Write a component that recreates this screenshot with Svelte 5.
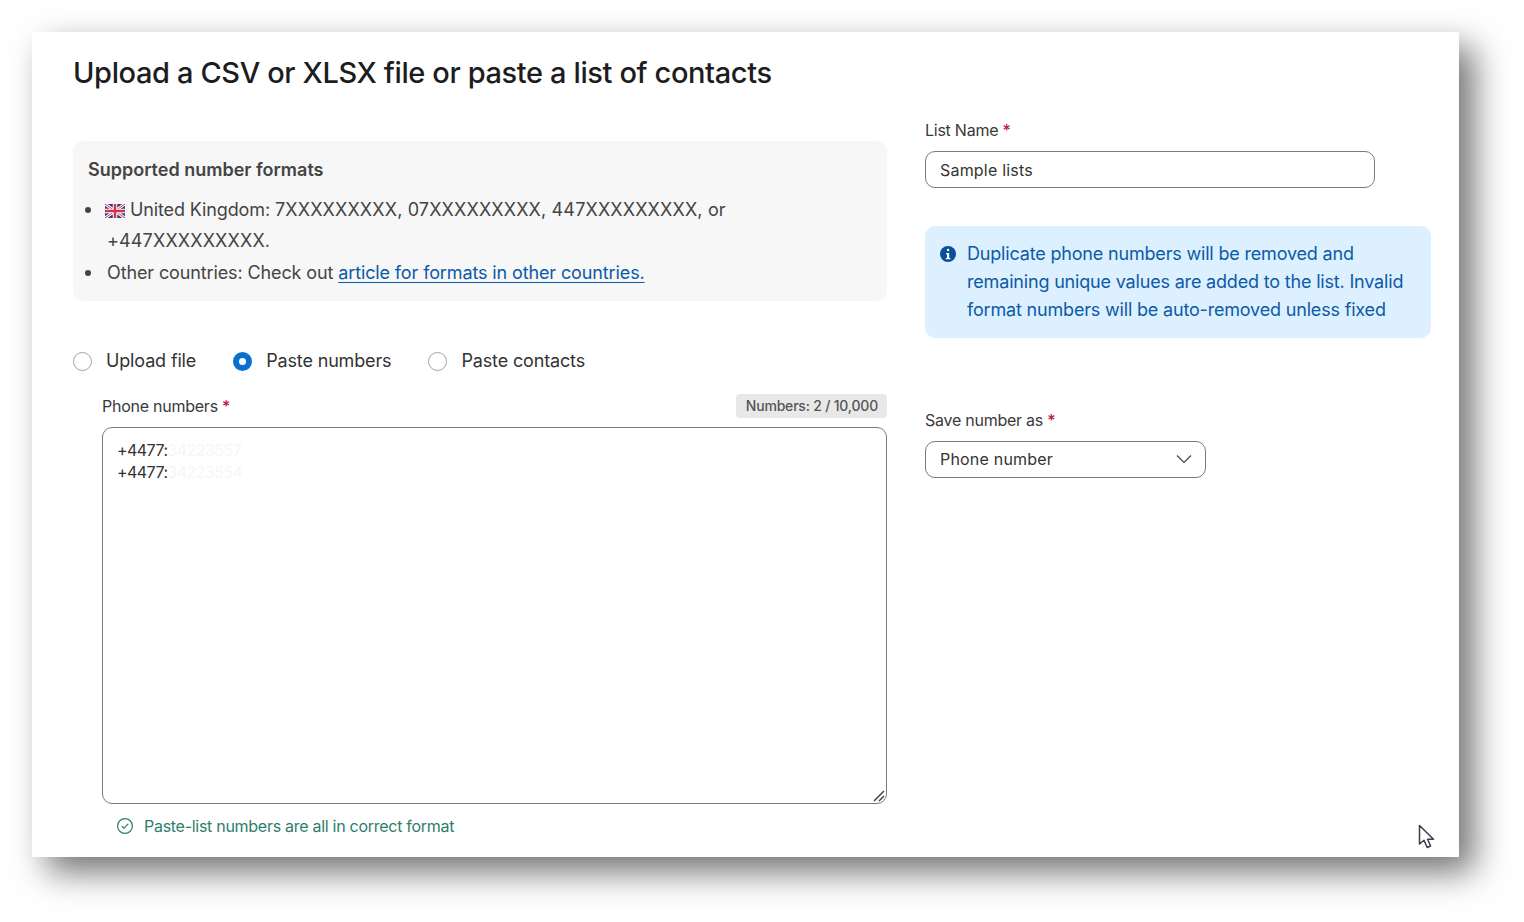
<script>
  let mode = $state('numbers');
  const modes = [
    { id: 'file', label: 'Upload file' },
    { id: 'numbers', label: 'Paste numbers' },
    { id: 'contacts', label: 'Paste contacts' }
  ];
  const numbers = [
    ['+4477:', '34223557'],
    ['+4477:', '34223554']
  ];
</script>

<div class="page">
  <main class="card">
    <h1>Upload a CSV or XLSX file or paste a list of contacts</h1>
    <div class="cols">
      <section class="left">
        <div class="formats">
          <h2>Supported number formats</h2>
          <ul>
            <li>
              <svg class="flag" viewBox="0 0 20 14" width="20" height="14" aria-hidden="true">
                <rect width="20" height="14" rx="1" fill="#2b3f86" />
                <path d="M0 0 20 14M20 0 0 14" stroke="#fff" stroke-width="3" />
                <path d="M0 0 20 14M20 0 0 14" stroke="#d5324a" stroke-width="1" />
                <path d="M10 0v14M0 7h20" stroke="#fff" stroke-width="4.5" />
                <path d="M10 0v14M0 7h20" stroke="#d5324a" stroke-width="2.5" />
              </svg>
              United Kingdom: <span class="fmt">7XXXXXXXXX, 07XXXXXXXXX, 447XXXXXXXXX, or</span>
              <span class="fmt">+447XXXXXXXXX.</span>
            </li>
            <li>Other countries: Check out <a href="#formats">article for formats in other countries.</a></li>
          </ul>
        </div>

        <div class="radios">
          {#each modes as m (m.id)}
            <label class="radio">
              <input type="radio" name="mode" value={m.id} bind:group={mode} />
              <span class="dot"></span>
              <span class="radio-text">{m.label}</span>
            </label>
          {/each}
        </div>

        <div class="paste">
          <div class="paste-head">
            <span class="label">Phone numbers <b>*</b></span>
            <span class="count">Numbers: 2 / 10,000</span>
          </div>
          <div class="area">
            {#each numbers as n (n[1])}
              <div>{n[0]}<span class="blur">{n[1]}</span></div>
            {/each}
            <svg class="grip" viewBox="0 0 12 12" width="12" height="12" aria-hidden="true">
              <path d="M1 11 11 1M6 11l5-5" stroke="#444" stroke-width="1.5" fill="none" />
            </svg>
          </div>
          <div class="ok">
            <svg viewBox="0 0 18 18" width="18" height="18" aria-hidden="true">
              <circle cx="9" cy="9" r="7.4" fill="none" stroke="#2f7d6b" stroke-width="1.2" />
              <path d="M5.8 9.3 8 11.2 12.2 6.9" fill="none" stroke="#2f7d6b" stroke-width="1.2" />
            </svg>
            <span>Paste-list numbers are all in correct format</span>
          </div>
        </div>
      </section>

      <aside class="right">
        <span class="label">List Name <b>*</b></span>
        <div class="field name">Sample lists</div>

        <div class="info">
          <svg viewBox="0 0 16 16" width="16" height="16" aria-hidden="true">
            <circle cx="8" cy="8" r="8" fill="#0a4f9e" />
            <rect x="6.9" y="2.8" width="2.4" height="2.4" rx="1.2" fill="#fff" />
            <path d="M6 7h3.2v5H10.400v1.300H5.800V12H7V8.300H6z" fill="#fff" />
          </svg>
          <p>Duplicate phone numbers will be removed and remaining unique values are added to the list. Invalid format numbers will be auto-removed unless fixed</p>
        </div>

        <span class="label save">Save number as <b>*</b></span>
        <div class="field select">
          <span>Phone number</span>
          <svg viewBox="0 0 16 10" width="16" height="10" aria-hidden="true">
            <path d="M1 1.500 8 8.500 15 1.500" fill="none" stroke="#444" stroke-width="1.200" />
          </svg>
        </div>
      </aside>
    </div>

    <svg class="cursor" viewBox="0 0 18 26" width="18" height="26" aria-hidden="true">
      <path d="M1.500 1.500V20L6 16.200 9.200 23.500 12.600 22 9.600 15.200H15.500Z" fill="#fff" stroke="#3a3d4a" stroke-width="1.500" stroke-linejoin="round" />
    </svg>
  </main>
</div>

<style>
  :global(body) { margin: 0; background: #fff; }
  .page {
    width: 1524px; height: 922px; padding: 32px 0 0 32px; box-sizing: border-box;
    font-family: Inter, "Noto Sans", sans-serif; color: #333; overflow: hidden;
  }
  .card {
    position: relative; width: 1427px; height: 825px; box-sizing: border-box;
    padding: 22px 28px 0 42px; background: #fff;
    box-shadow: 15px 15px 32px rgba(0, 0, 0, 0.55);
  }
  h1 { margin: 0 0 49px -1px; font-size: 29px; line-height: 38px; font-weight: 500; letter-spacing: -0.38px; color: #1d1d1f; }
  .cols { display: grid; grid-template-columns: 814px 506px; column-gap: 38px; align-items: start; margin-left: -1px; }

  .formats { height: 160px; box-sizing: border-box; padding: 17px 15px; background: #f7f7f7; border-radius: 10px; }
  h2 { margin: 0 0 13px; font-size: 18px; line-height: 23px; font-weight: 600; letter-spacing: 0; color: #444; }
  ul { margin: 0; padding: 0 100px 0 19px; list-style: none; font-size: 18px; line-height: 31.250px; letter-spacing: -0.12px; color: #444; }
  li { position: relative; }
  li::before {
    content: ""; position: absolute; left: -22px; top: 13px;
    width: 6px; height: 6px; border-radius: 50%; background: #444;
  }
  .flag { vertical-align: -2px; margin-left: -2px; }
  .fmt { letter-spacing: 0.15px; white-space: nowrap; }
  a { color: #0a5aa8; text-decoration-thickness: 1px; text-underline-offset: 3px; white-space: nowrap; }

  .radios { display: flex; gap: 37px; margin-top: 47px; height: 26px; align-items: center; }
  .radio { display: flex; align-items: center; gap: 14px; font-size: 18px; letter-spacing: -0.15px; color: #333; }
  .radio-text { padding-bottom: 2px; }
  .radio input { position: absolute; opacity: 0; width: 0; height: 0; }
  .dot { width: 19px; height: 19px; box-sizing: border-box; border: 1.500px solid #a3a3a3; border-radius: 50%; background: #fff; }
  .radio input:checked + .dot { border: 6px solid #0a6fd0; }

  .paste { margin: 20px 0 0 29px; }
  .paste-head { display: flex; justify-content: space-between; align-items: center; height: 24px; margin-bottom: 9px; }
  .label { font-size: 16px; line-height: 20px; letter-spacing: -0.25px; color: #3a3a3a; }
  .label b { font-weight: 500; color: #c0143c; }
  .count { padding: 0 9px 0 10px; font-size: 14px; line-height: 24px; font-weight: 500; letter-spacing: -0.2px; color: #555; background: #e8e8e8; border-radius: 4px; }
  .area {
    position: relative; height: 377px; box-sizing: border-box; padding: 11px 14px;
    border: 1.500px solid #7a7a7a; border-radius: 10px;
    font-size: 16px; line-height: 22px; letter-spacing: -0.55px; color: #333;
  }
  .blur { color: #f6f6f6; }
  .grip { position: absolute; right: 1px; bottom: 1px; }
  .ok { display: flex; align-items: center; gap: 10px; margin: 12px 0 0 14px; font-size: 16px; line-height: 20px; letter-spacing: -0.28px; color: #2f7d6b; }

  .right { margin-top: -21px; }
  .right > .label { display: block; }
  .field {
    height: 37px; box-sizing: border-box; padding: 0 14px; margin-top: 11px;
    display: flex; align-items: center; justify-content: space-between;
    border: 1.500px solid #7a7a7a; border-radius: 10px;
    font-size: 16px; letter-spacing: 0.2px; color: #333;
  }
  .name { width: 450px; }
  .select { width: 281px; padding-bottom: 2px; padding-right: 13px; }
  .info {
    display: flex; gap: 11px; height: 112px; box-sizing: border-box; margin-top: 38px; padding: 14px 15px;
    background: #dcf0ff; border-radius: 10px; color: #0d5aa7;
  }
  .info svg { flex: none; margin-top: 6px; }
  .info p { margin: 0; font-size: 18px; line-height: 28px; letter-spacing: -0.18px; }
  .right > .save { margin-top: 72px; }

  .cursor { position: absolute; right: 23px; bottom: 7px; }
</style>
